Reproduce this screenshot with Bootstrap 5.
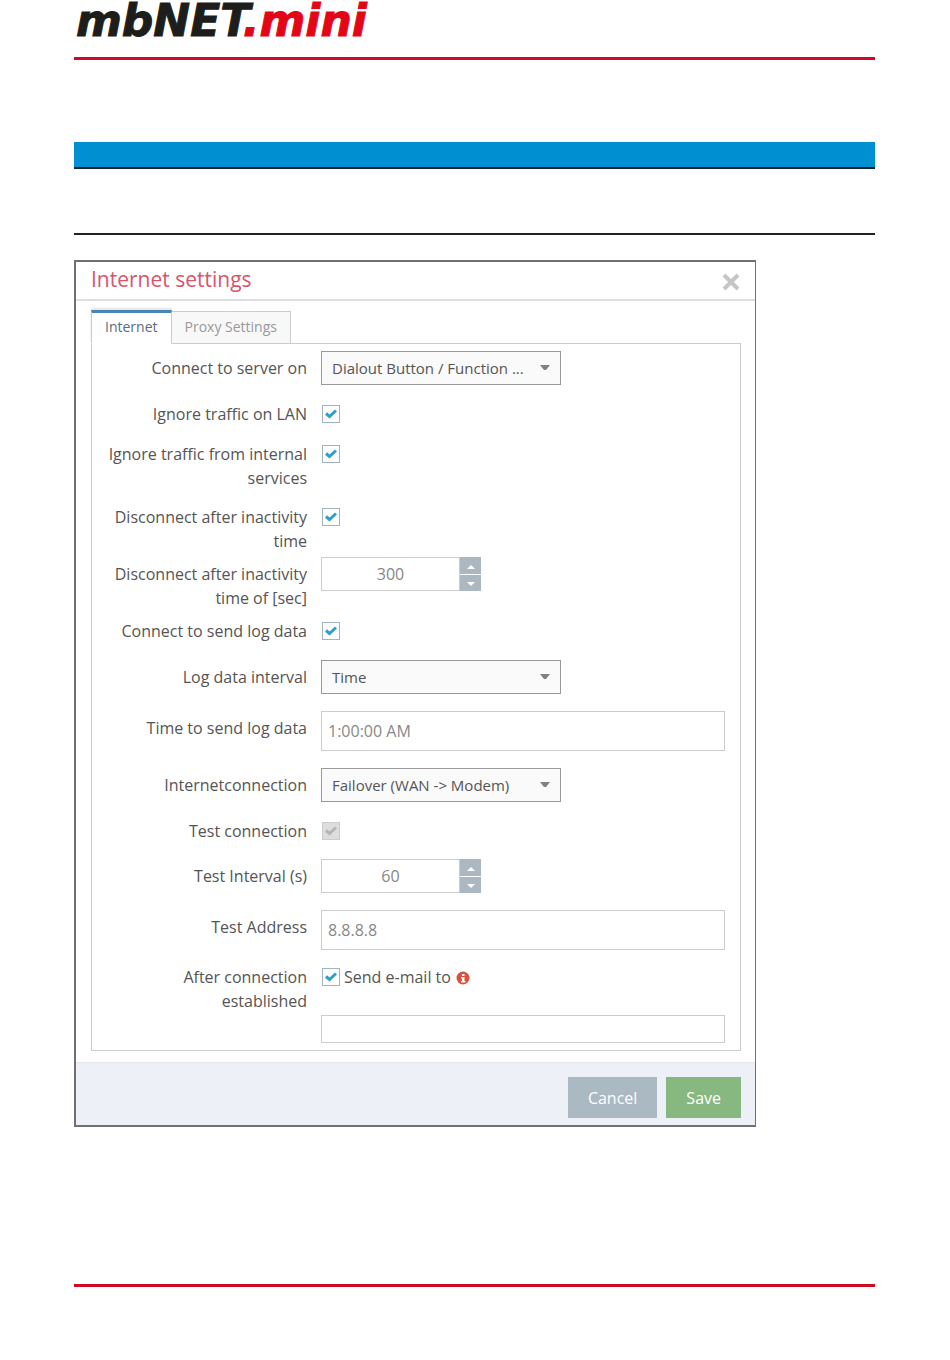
<!DOCTYPE html>
<html lang="en">
<head>
<meta charset="utf-8">
<meta name="viewport" content="width=device-width, initial-scale=1">
<title>mbNET.mini – Internet settings</title>
<link href="https://cdn.jsdelivr.net/npm/bootstrap@5.3.0/dist/css/bootstrap.min.css" rel="stylesheet">
<style>
  body { font-family: "Open Sans", "Noto Sans", sans-serif; font-size: 16px; line-height: 24px; color: #555; background: #fff; }
  .sheet { padding: 0 75px 72px 74px; }
  .brand { font: italic bold 44px/42px "DejaVu Sans", sans-serif; color: #1d1d1b; height: 57px; padding-left: 2px; -webkit-text-stroke: 1px; }
  .brand span { color: #e30617; }
  .rule-red { height: 3px; background: #ce0a24; }
  .bar-blue { height: 27px; margin-top: 82px; background: #008fd0; border-bottom: 2px solid #10222c; }
  .rule-black { height: 2px; margin: 64px 0 25px; background: #222; }
  .dialog { max-width: 682px; border: 2px solid #707073; border-right-width: 1px; margin-bottom: 157px; }
  .dialog-head { height: 39px; padding: 0 15px; border-bottom: 2px solid #dfdfdf; }
  .dialog-head h1 { font-size: 21px; line-height: 34px; color: #d9546b; }
  .close-x { width: 18px; height: 18px; margin-top: 3px; line-height: 0; }
  .dialog-body { padding: 9px 14px 11px 15px; }
  .tabs { position: relative; margin-bottom: -1px; }
  .tabs .nav-link { height: 33px; margin: 1px 0 0; padding: 0 13px; border: 1px solid #ccc; border-left: 0; border-radius: 0; font-size: 14px; line-height: 30px; color: #999; background: #f8f8f8; }
  .tabs .nav-link.active { height: 34px; margin: 0; border-top: 3px solid #4a86b4; border-left: 1px solid #ccc; border-bottom-color: #fff; line-height: 28px; color: #5d6b80; background: #fff; box-shadow: 0 -2px 2px #e4e4e4; }
  .pane { padding: 7px 15px 7px 0; border: 1px solid #ccc; }
  .field { display: grid; grid-template-columns: 215px 1fr; column-gap: 14px; margin-bottom: 17px; }
  .field-label { padding: 5px 0 0 14px; text-align: right; }
  .field-check { margin-bottom: 16px; }
  .field-check .field-label { padding-top: 0; }
  .field-tight { margin-bottom: 15px; }
  .field-close { margin-bottom: 9px; }
  .form-select, .form-control { border-radius: 0; font-size: 16px; }
  .form-select { width: 240px; height: 34px; padding: 0 30px 0 10px; font-size: 15px; color: #555; border: 1px solid #999; background: #fafafa url("data:image/svg+xml,%3Csvg xmlns='http://www.w3.org/2000/svg' viewBox='0 0 10 6'%3E%3Cpath d='M0 0h10L6 5H4z' fill='%23808080'/%3E%3C/svg%3E") no-repeat right 10px center / 10px 6px; }
  .form-control { height: 40px; padding: 0 6px; color: #888; border: 1px solid #ccc; }
  .short-box { height: 28px; margin-top: 26px; }
  .form-check-input[type=checkbox] { flex: none; width: 18px; height: 18px; margin: 3px 0 0 1px; border: 1px solid #9fb3c3; border-radius: 0; background: #fff; }
  .form-check-input[type=checkbox]:checked { border-color: #9fb3c3; background: #fff url("data:image/svg+xml,%3Csvg xmlns='http://www.w3.org/2000/svg' viewBox='0 0 12 10'%3E%3Cpath d='M1 4.500l3.500 3L11 1.500' fill='none' stroke='%232d9fc9' stroke-width='3'/%3E%3C/svg%3E") no-repeat center / 12px 10px; }
  .form-check-input[type=checkbox]:disabled { opacity: 1; border-color: #ccc; background: #ddd url("data:image/svg+xml,%3Csvg xmlns='http://www.w3.org/2000/svg' viewBox='0 0 12 10'%3E%3Cpath d='M1 4.500l3.500 3L11 1.500' fill='none' stroke='%23b4b4b4' stroke-width='3'/%3E%3C/svg%3E") no-repeat center / 12px 10px; }
  .spin { width: 160px; height: 34px; }
  .spin .form-control { height: 34px; text-align: center; }
  .spin-btns { flex: none; width: 21px; gap: 1px; }
  .spin-btns button { flex: 1; padding: 3px 0 0; border: 0; background: #abb8c2; line-height: 0; }
  .dialog-foot { height: 63px; padding: 14px 14px 0; background: #edf1f7; border-top: 1px solid #e3e6ea; gap: 9px; }
  .dialog-foot .btn { height: 41px; padding: 0 20px; border: 0; border-radius: 0; font-size: 16px; color: #fff; }
  .dialog-foot .btn-grey { background: #abb9c3; }
  .dialog-foot .btn-green { background: #87b87f; }
</style>
</head>
<body>
<div class="sheet">
  <header>
    <div class="brand">mbNET<span>.mini</span></div>
    <div class="rule-red"></div>
  </header>
  <div class="bar-blue"></div>
  <div class="rule-black"></div>

  <form class="dialog">
    <div class="dialog-head d-flex justify-content-between align-items-center">
      <h1 class="m-0 fw-normal align-self-start">Internet settings</h1>
      <button type="button" class="close-x border-0 bg-transparent p-0" aria-label="Close">
        <svg width="18" height="18" viewBox="0 0 18 18"><path d="M2 2l14 14M16 2L2 16" stroke="#c6c6c6" stroke-width="4"/></svg>
      </button>
    </div>
    <div class="dialog-body">
      <nav class="tabs d-flex">
        <a class="nav-link active" href="#internet">Internet</a>
        <a class="nav-link" href="#proxy">Proxy Settings</a>
      </nav>
      <div class="pane" id="internet">
        <div class="field">
          <label class="field-label" for="server">Connect to server on</label>
          <div><select class="form-select" id="server"><option>Dialout Button / Function ...</option></select></div>
        </div>
        <div class="field field-check">
          <label class="field-label" for="lan">Ignore traffic on LAN</label>
          <div class="d-flex"><input class="form-check-input" type="checkbox" id="lan" checked></div>
        </div>
        <div class="field field-check field-tight">
          <label class="field-label" for="services">Ignore traffic from internal services</label>
          <div class="d-flex"><input class="form-check-input" type="checkbox" id="services" checked></div>
        </div>
        <div class="field field-check mb-1">
          <label class="field-label" for="inactive">Disconnect after inactivity time</label>
          <div class="d-flex"><input class="form-check-input" type="checkbox" id="inactive" checked></div>
        </div>
        <div class="field field-close">
          <label class="field-label" for="seconds">Disconnect after inactivity time of [sec]</label>
          <div class="spin d-flex">
            <input class="form-control" type="text" id="seconds" value="300">
            <div class="spin-btns d-flex flex-column">
              <button type="button" aria-label="Increase"><svg width="8" height="4" viewBox="0 0 8 4"><path d="M0 4L4 0l4 4z" fill="#fff"/></svg></button>
              <button type="button" aria-label="Decrease"><svg width="8" height="4" viewBox="0 0 8 4"><path d="M0 0l4 4 4-4z" fill="#fff"/></svg></button>
            </div>
          </div>
        </div>
        <div class="field">
          <label class="field-label pt-0" for="sendlog">Connect to send log data</label>
          <div class="d-flex"><input class="form-check-input" type="checkbox" id="sendlog" checked></div>
        </div>
        <div class="field">
          <label class="field-label" for="interval">Log data interval</label>
          <div><select class="form-select" id="interval"><option>Time</option></select></div>
        </div>
        <div class="field">
          <label class="field-label" for="logtime">Time to send log data</label>
          <div><input class="form-control" type="text" id="logtime" value="1:00:00 AM"></div>
        </div>
        <div class="field">
          <label class="field-label" for="connection">Internetconnection</label>
          <div><select class="form-select" id="connection"><option>Failover (WAN -&gt; Modem)</option></select></div>
        </div>
        <div class="field field-check">
          <label class="field-label" for="test">Test connection</label>
          <div class="d-flex"><input class="form-check-input" type="checkbox" id="test" checked disabled></div>
        </div>
        <div class="field">
          <label class="field-label" for="testint">Test Interval (s)</label>
          <div class="spin d-flex">
            <input class="form-control" type="text" id="testint" value="60">
            <div class="spin-btns d-flex flex-column">
              <button type="button" aria-label="Increase"><svg width="8" height="4" viewBox="0 0 8 4"><path d="M0 4L4 0l4 4z" fill="#fff"/></svg></button>
              <button type="button" aria-label="Decrease"><svg width="8" height="4" viewBox="0 0 8 4"><path d="M0 0l4 4 4-4z" fill="#fff"/></svg></button>
            </div>
          </div>
        </div>
        <div class="field field-tight">
          <label class="field-label" for="address">Test Address</label>
          <div><input class="form-control" type="text" id="address" value="8.8.8.8"></div>
        </div>
        <div class="field field-check mb-0">
          <label class="field-label" for="mailto">After connection established</label>
          <div>
            <div class="d-flex align-items-start">
              <input class="form-check-input" type="checkbox" id="sendmail" checked>
              <label class="ms-1" for="sendmail">Send e-mail to</label>
              <svg class="ms-1 mt-1" width="16" height="18" viewBox="0 0 16 18"><circle cx="8" cy="9" r="6.500" fill="#d9533c"/><path d="M7 5h2.500v2H7zM6 8h3.500v4h1v1.500H6V12h1V9.500H6z" fill="#fff"/></svg>
            </div>
            <input class="form-control short-box" type="text" id="mailto">
          </div>
        </div>
      </div>
    </div>
    <div class="dialog-foot d-flex justify-content-end align-items-start">
      <button type="button" class="btn btn-grey">Cancel</button>
      <button type="submit" class="btn btn-green">Save</button>
    </div>
  </form>
  <div class="rule-red"></div>
</div>
<script src="https://cdn.jsdelivr.net/npm/bootstrap@5.3.0/dist/js/bootstrap.bundle.min.js"></script>
</body>
</html>
